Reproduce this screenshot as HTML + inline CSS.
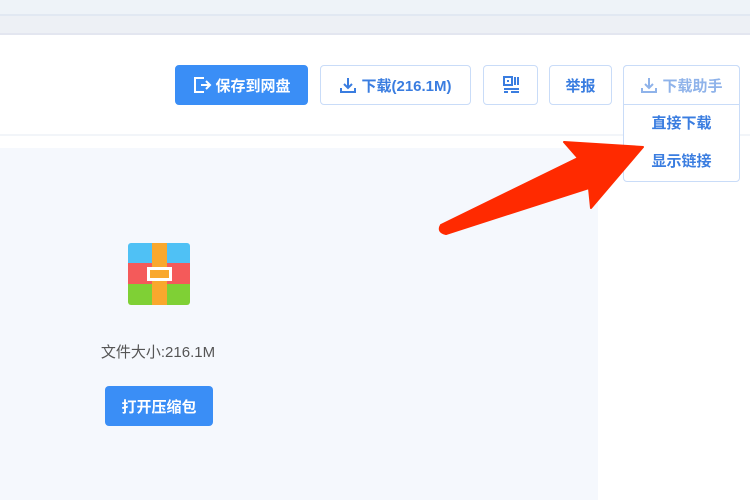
<!DOCTYPE html>
<html><head><meta charset="utf-8"><style>
body{margin:0;width:750px;height:500px;overflow:hidden;background:#fff;font-family:"Liberation Sans","Noto Sans CJK SC",sans-serif;position:relative}
.a{position:absolute;box-sizing:border-box}
.btn{border:1.5px solid #c9dcf8;border-radius:4px;color:#3a7de0;font-size:15px;font-weight:600;display:flex;align-items:center;justify-content:center;background:#fff}
</style></head><body>
<div class="a" style="left:0;top:0;width:750px;height:14px;background:#eef3f8"></div>
<div class="a" style="left:0;top:14px;width:750px;height:2px;background:#e1e8f2"></div>
<div class="a" style="left:0;top:16px;width:750px;height:17px;background:#edf0f5"></div>
<div class="a" style="left:0;top:33px;width:750px;height:2px;background:#e3e6f0"></div>
<div class="a" style="left:0;top:134px;width:750px;height:2px;background:#f2f5f9"></div>
<div class="a" style="left:0;top:148px;width:598px;height:352px;background:#f5f8fd"></div>

<div class="a btn" style="left:175px;top:65px;width:133px;height:40px;background:#3a8ef6;border-color:#3a8ef6;color:#fff">
<svg width="20" height="18" viewBox="0 0 20 18" style="margin-right:3px"><path d="M12 2H3v14h9M9 9h9M14 5l4 4-4 4" fill="none" stroke="#fff" stroke-width="2"/></svg>保存到网盘</div>
<div class="a btn" style="left:320px;top:65px;width:151px;height:40px">
<svg width="18" height="18" viewBox="0 0 18 18" style="margin-right:4px"><path d="M9 2v10M5 8l4 4 4-4M2 12v4h14v-4" fill="none" stroke="#3a7de0" stroke-width="2"/></svg>下载(216.1M)</div>
<div class="a btn" style="left:483px;top:65px;width:55px;height:40px">
<svg width="16" height="18" viewBox="0 0 16 18"><rect x="1" y="1" width="8" height="8" fill="none" stroke="#3a7de0" stroke-width="2"/><rect x="4" y="4" width="2" height="2" fill="#3a7de0"/><rect x="11" y="1" width="2" height="8" fill="#3a7de0"/><rect x="14" y="1" width="2" height="8" fill="#3a7de0"/><rect x="1" y="12" width="15" height="2" fill="#3a7de0"/><rect x="1" y="15" width="4" height="2" fill="#3a7de0"/><rect x="8" y="15" width="8" height="2" fill="#3a7de0"/></svg></div>
<div class="a btn" style="left:549px;top:65px;width:63px;height:40px">举报</div>
<div class="a" style="left:623px;top:65px;width:117px;height:117px;border:1.5px solid #c9dcf8;border-radius:4px;background:#fff"></div>
<div class="a btn" style="left:623px;top:65px;width:117px;height:40px;border-radius:4px 4px 0 0;color:#8fb3ea">
<svg width="18" height="18" viewBox="0 0 18 18" style="margin-right:4px"><path d="M9 2v10M5 8l4 4 4-4M2 12v4h14v-4" fill="none" stroke="#8fb3ea" stroke-width="2"/></svg>下载助手</div>
<div class="a" style="left:623px;top:112px;width:117px;text-align:center;color:#3a7de0;font-size:15px;font-weight:600">直接下载</div>
<div class="a" style="left:623px;top:150px;width:117px;text-align:center;color:#3a7de0;font-size:15px;font-weight:600">显示链接</div>

<svg class="a" style="left:0;top:0" width="750" height="500"><path d="M564 142L643 147L591 208L589 188L446 234Q437 232 441 225L578 158Z" fill="#ff2a00" stroke="#ff2a00" stroke-width="2" stroke-linejoin="round"/></svg>

<div class="a" style="left:128px;top:243px;width:62px;height:62px;border-radius:3px;overflow:hidden">
<div style="height:20px;background:#4fc1f5"></div><div style="height:21px;background:#f45a5a"></div><div style="height:21px;background:#7fd035"></div>
<div class="a" style="left:24px;top:0;width:15px;height:62px;background:#f9a82d"></div>
<div class="a" style="left:19px;top:24px;width:25px;height:14px;border:3px solid #fff;background:#f9a82d"></div>
</div>
<div class="a" style="left:88px;top:341px;width:140px;text-align:center;color:#555;font-size:15px">文件大小:216.1M</div>
<div class="a" style="left:105px;top:386px;width:108px;height:40px;background:#3a8ef6;border-radius:4px;color:#fff;font-size:15px;font-weight:600;display:flex;align-items:center;justify-content:center">打开压缩包</div>
</body></html>
